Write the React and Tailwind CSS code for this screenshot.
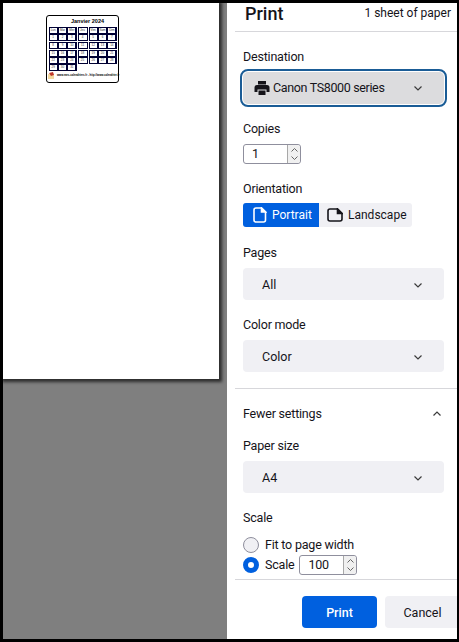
import React from 'react';

const WEEKS = [
    [['Lun', 'Mar', 'Mer'], ['Jeu'], ['Ven', 'Sam', 'Dim']],
    [['1', '2', '3'], ['4'], ['5', '6', '7']],
];
const WEEK_TWO = [['8', '9', '10'], ['11'], ['12', '13', '14']];
const LOWER_WEEKS = [
    [['15', '16', '17'], ['18'], ['19', '20', '21']],
    [['22', '23', '24'], ['25'], ['26', '27', '28']],
    [['29', '30', '31'], [], []],
];

function CalendarBlock({ rows }) {
    return (
        <div className="flex gap-[1px]">
            {[0, 1, 2].map((col) => (
                <div key={col} className={`flex flex-col ${col === 1 ? 'w-[10px]' : 'w-[28px]'}`}>
                    {rows.map((row, i) =>
                        row[col].length > 0 ? (
                            <div key={i} className="flex gap-[2px] bg-[#000033] px-[1px] py-[1px]">
                                {row[col].map((d) => (
                                    <div key={d} className="flex-1 h-[5px] bg-white text-[3px] leading-[5px] text-center text-[#333] overflow-hidden">
                                        {d}
                                    </div>
                                ))}
                            </div>
                        ) : null
                    )}
                </div>
            ))}
        </div>
    );
}

function MiniCalendar() {
    return (
        <div className="ml-[43px] mt-[12px] w-[73px] h-[68px] border border-black rounded-[3px] flex flex-col items-center bg-white font-['Liberation_Sans',sans-serif]">
            <div className="text-[5.5px] leading-[6px] font-bold mt-[2px] ml-[10px] text-black">Janvier 2024</div>
            <div className="mt-[3px] flex flex-col gap-[1px]">
                <CalendarBlock rows={WEEKS} />
                <CalendarBlock rows={[WEEK_TWO]} />
                <CalendarBlock rows={LOWER_WEEKS} />
            </div>
            <div className="w-full flex items-center mt-[1px] pl-[1px]">
                <svg width="7" height="7" viewBox="0 0 7 7" className="shrink-0">
                    <rect x="0" y="2" width="6" height="5" fill="#f3d9a0" />
                    <path d="M1 1 L5 0 L6 3 L3 4 Z" fill="#c0392b" />
                </svg>
                <span className="text-[2.7px] leading-[4px] font-bold text-black ml-[2px] whitespace-nowrap">www.mes-calendriers.fr - http://www.calendrier.fr</span>
            </div>
        </div>
    );
}

function Chevron({ up }) {
    return (
        <svg width="12" height="12" viewBox="0 0 12 12" fill="none" stroke="#3b3b3b" strokeWidth="1.2" className="shrink-0">
            <path d={up ? 'M2.5 7.5 L6 4 L9.5 7.5' : 'M2.5 4.5 L6 8 L9.5 4.5'} />
        </svg>
    );
}

function Label({ children, className = '' }) {
    return <div className={`text-[12.5px] leading-[18px] tracking-[-0.2px] text-[#15141a] ${className}`}>{children}</div>;
}

function Select({ children }) {
    return (
        <div className="h-[32px] w-[201px] rounded-[4px] bg-[#f0f0f4] flex items-center pt-[2px] pl-[19px] pr-[20px] justify-between text-[12.5px] text-[#15141a]">
            <span>{children}</span>
            <Chevron />
        </div>
    );
}

function Spinner() {
    return (
        <div className="w-[13px] h-full border-l border-[#a8a8a8] bg-[#f0f0f0] flex flex-col items-center justify-center rounded-r-[3px]">
            <svg width="9" height="8" viewBox="0 0 9 8" fill="none" stroke="#666" strokeWidth="1"><path d="M1.5 5.5 L4.5 2.5 L7.5 5.5" /></svg>
            <svg width="9" height="8" viewBox="0 0 9 8" fill="none" stroke="#666" strokeWidth="1"><path d="M1.5 2.5 L4.5 5.5 L7.5 2.5" /></svg>
        </div>
    );
}

function NumberField({ value, width }) {
    return (
        <div className={`${width} h-[20px] border border-[#8f8f9d] rounded-[3px] flex items-center justify-between bg-white text-[12.5px] text-[#15141a]`}>
            <span className="pl-[8px]">{value}</span>
            <Spinner />
        </div>
    );
}

function PortraitIcon({ color }) {
    return (
        <svg width="14" height="16" viewBox="0 0 14 16" fill="none" stroke={color} strokeWidth="1.6" className="shrink-0">
            <path d="M3 1 H8.5 L12.5 5 V13 A2 2 0 0 1 10.5 15 H3 A2 2 0 0 1 1 13 V3 A2 2 0 0 1 3 1 Z" />
            <path d="M8.5 1 V5 H12.5 Z" fill={color} />
        </svg>
    );
}

function LandscapeIcon({ color }) {
    return (
        <svg width="16" height="14" viewBox="0 0 16 14" fill="none" stroke={color} strokeWidth="1.6" className="shrink-0">
            <path d="M3 1 H10.5 L15 5.5 V11 A2 2 0 0 1 13 13 H3 A2 2 0 0 1 1 11 V3 A2 2 0 0 1 3 1 Z" />
            <path d="M10.5 1 V5.5 H15 Z" fill={color} />
        </svg>
    );
}

export default function App() {
    return (
        <div className="w-[459px] h-[642px] bg-black pt-[3px] pl-[3px] pr-[2px] pb-[3px] font-['Roboto',sans-serif] overflow-hidden">
            <div className="flex h-full">
                {/* Vista previa */}
                <div className="w-[224px] h-full bg-[#7f7f7f] shrink-0">
                    <div className="w-[216px] h-[376px] bg-white shadow-[1px_1px_3px_2px_rgba(0,0,0,0.65)] flex flex-col">
                        <MiniCalendar />
                    </div>
                </div>

                {/* Panel de impresión */}
                <div className="flex-1 h-full bg-white flex flex-col overflow-hidden">
                    <div className="ml-[8px] h-[29px] border-b border-[#d7d7db] flex items-start justify-between pr-[6px] pl-[10px] shrink-0">
                        <span className="text-[18px] leading-[22px] font-medium text-[#15141a]">Print</span>
                        <span className="text-[12px] leading-[18px] text-[#15141a] mt-[1px]">1 sheet of paper</span>
                    </div>

                    <div className="pl-[16px] flex-1 overflow-hidden">
                        <Label className="mt-[16px]">Destination</Label>
                        <div className="mt-[3px] -ml-[3px] w-[207px] h-[38px] rounded-[8px] border-2 border-[#1a5c96] p-px">
                            <div className="h-full rounded-[5px] bg-[#dcdcde] flex items-center justify-between pl-[11px] pr-[20px] text-[12.5px] tracking-[-0.35px] text-[#15141a]">
                                <span className="flex items-center gap-[3px]">
                                    <svg width="16" height="16" viewBox="0 0 16 16" fill="#15141a">
                                        <path d="M4 1 H12 V4.5 H4 Z" />
                                        <path d="M3 5 H13 A2.5 2.5 0 0 1 15.5 7.5 V12 H12.5 V9.5 H3.5 V12 H0.5 V7.5 A2.5 2.5 0 0 1 3 5 Z" />
                                        <path d="M4.5 10.5 H11.5 V15 H4.5 Z" />
                                    </svg>
                                    Canon TS8000 series
                                </span>
                                <Chevron />
                            </div>
                        </div>

                        <Label className="mt-[13px]">Copies</Label>
                        <div className="mt-[6px]"><NumberField value="1" width="w-[58px]" /></div>

                        <Label className="mt-[16px]">Orientation</Label>
                        <div className="mt-[5px] flex w-[169px] h-[24px] rounded-[3px] bg-[#f0f0f4] overflow-hidden text-[12px]">
                            <div className="w-[76px] bg-[#0060df] text-white flex items-center pl-[10px] gap-[5px]">
                                <PortraitIcon color="#ffffff" />
                                Portrait
                            </div>
                            <div className="flex-1 flex items-center pl-[8px] gap-[5px] text-[#15141a]">
                                <LandscapeIcon color="#15141a" />
                                Landscape
                            </div>
                        </div>

                        <Label className="mt-[17px]">Pages</Label>
                        <div className="mt-[6px]"><Select>All</Select></div>

                        <Label className="mt-[16px]">Color mode</Label>
                        <div className="mt-[6px]"><Select>Color</Select></div>

                        <div className="-ml-[8px] mt-[16px] border-t border-[#d7d7db]"></div>

                        <div className="mt-[16px] w-[201px] pr-[1px] flex items-center justify-between">
                            <Label>Fewer settings</Label>
                            <Chevron up />
                        </div>

                        <Label className="mt-[14px]">Paper size</Label>
                        <div className="mt-[6px]"><Select>A4</Select></div>

                        <Label className="mt-[16px]">Scale</Label>
                        <div className="mt-[9px] flex items-center gap-[6px] h-[18px] text-[12.5px] tracking-[-0.2px] text-[#15141a]">
                            <span className="w-[16px] h-[16px] rounded-full border border-[#8f8f9d] bg-[#f0f0f4]"></span>
                            Fit to page width
                        </div>
                        <div className="mt-[1px] flex items-center gap-[5px] h-[20px] text-[12.5px] tracking-[-0.2px] text-[#15141a]">
                            <span className="w-[16px] h-[16px] mr-[1px] rounded-full border-[5px] border-[#0060df] bg-white"></span>
                            Scale
                            <NumberField value="100" width="w-[58px]" />
                        </div>
                    </div>

                    <div className="ml-[8px] border-t border-[#d7d7db] h-[60px] shrink-0 flex items-start pt-[16px] pl-[67px] gap-[8px] text-[12.5px]">
                        <button className="w-[75px] h-[32px] pt-[2px] rounded-[4px] bg-[#0060df] text-white font-medium shrink-0">Print</button>
                        <button className="w-[75px] h-[32px] pt-[2px] rounded-l-[4px] bg-[#f0f0f4] text-[#15141a] shrink-0">Cancel</button>
                    </div>
                </div>
            </div>
        </div>
    );
}
